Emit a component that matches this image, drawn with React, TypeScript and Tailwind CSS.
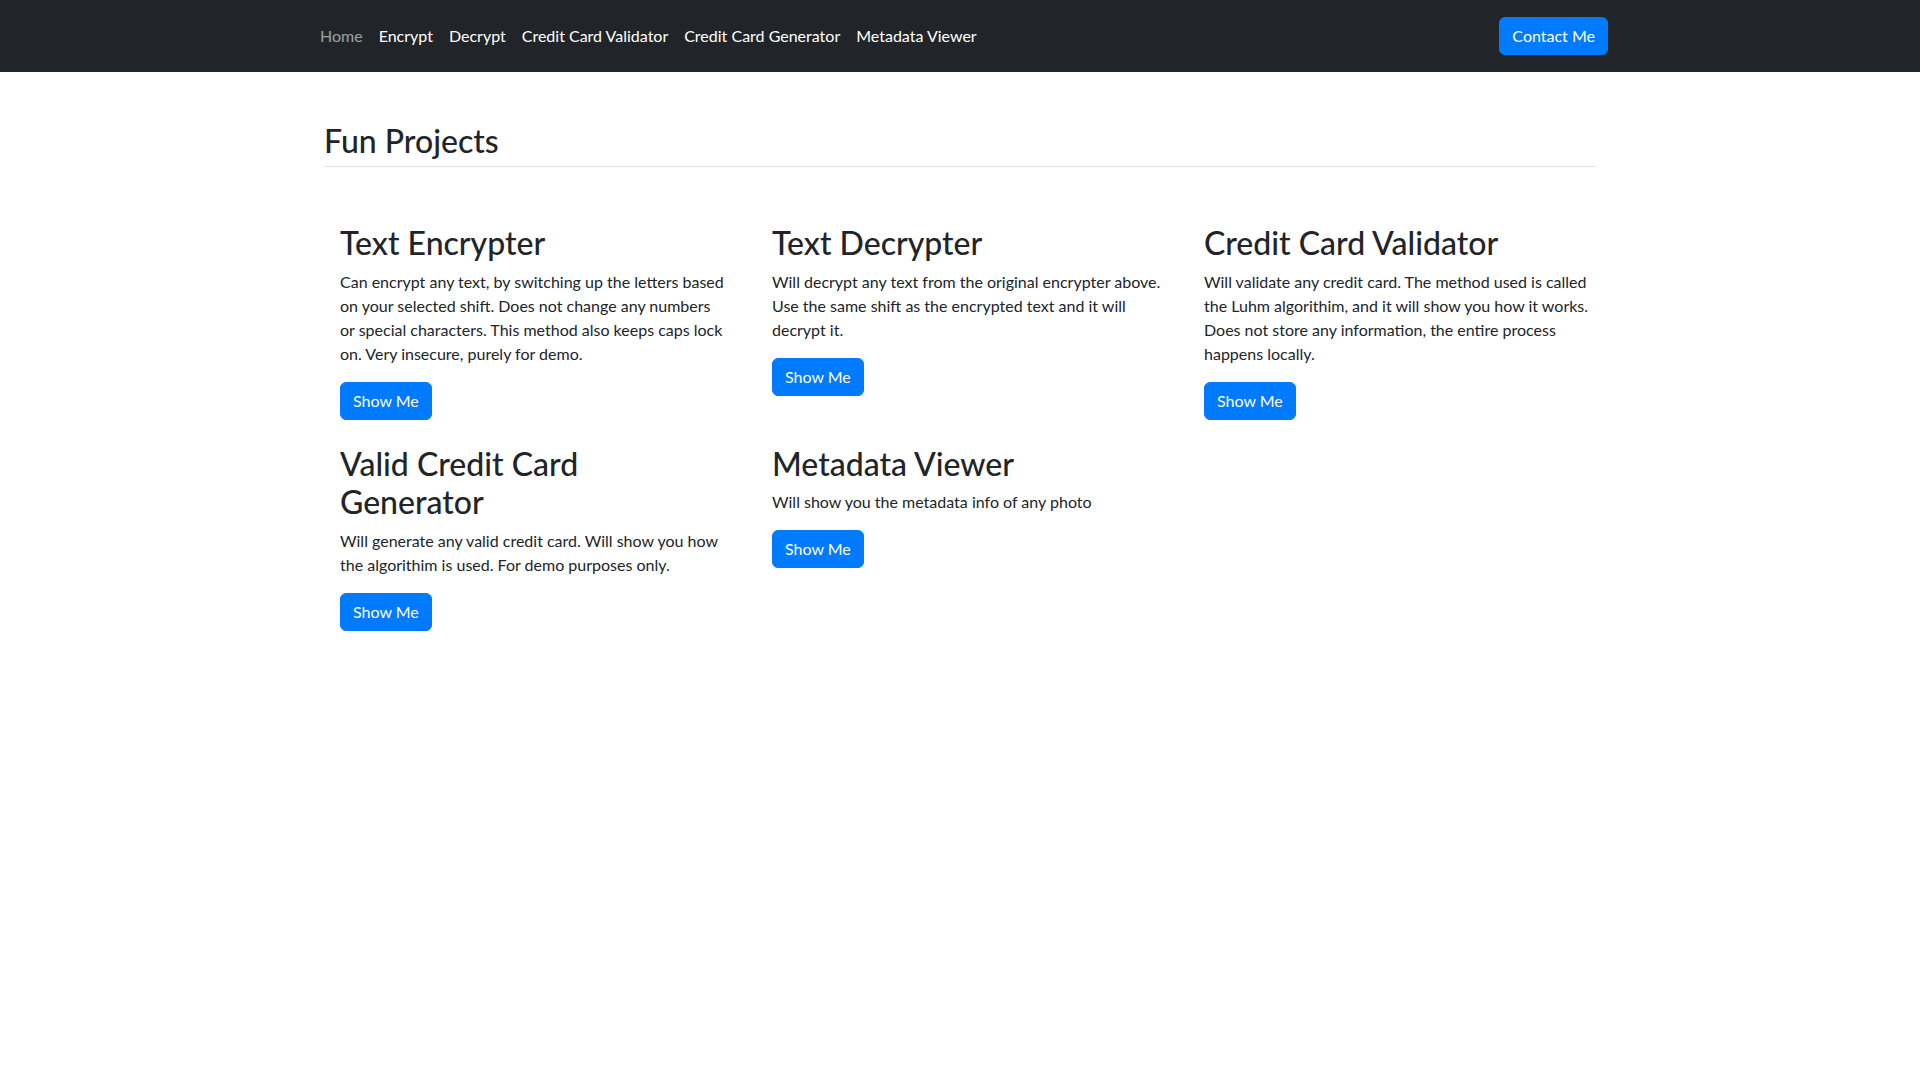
const navLinks = ["Encrypt", "Decrypt", "Credit Card Validator", "Credit Card Generator", "Metadata Viewer"]

const projects = [
  {
    title: "Text Encrypter",
    text: "Can encrypt any text, by switching up the letters based on your selected shift. Does not change any numbers or special characters. This method also keeps caps lock on. Very insecure, purely for demo.",
  },
  {
    title: "Text Decrypter",
    text: "Will decrypt any text from the original encrypter above. Use the same shift as the encrypted text and it will decrypt it.",
  },
  {
    title: "Credit Card Validator",
    text: "Will validate any credit card. The method used is called the Luhm algorithim, and it will show you how it works. Does not store any information, the entire process happens locally.",
  },
  {
    title: "Valid Credit Card Generator",
    text: "Will generate any valid credit card. Will show you how the algorithim is used. For demo purposes only.",
  },
  {
    title: "Metadata Viewer",
    text: "Will show you the metadata info of any photo",
  },
]

function Navbar() {
  return (
    <nav className="h-[72px] bg-[#212529]">
      <div className="mx-auto flex h-full w-[1320px] items-center justify-between px-3">
        <ul className="flex items-center">
          <li>
            <a href="#" className="block px-2 leading-6 text-white/55">Home</a>
          </li>
          {navLinks.map((link) => (
            <li key={link}>
              <a href="#" className="block px-2 leading-6 text-white">{link}</a>
            </li>
          ))}
        </ul>
        <button className="rounded-md border border-[#007bff] bg-[#007bff] px-3 py-1.5 leading-6 text-white">
          Contact Me
        </button>
      </div>
    </nav>
  )
}

export default function App() {
  return (
    <div className="min-h-screen bg-white font-['Lato',sans-serif] text-[16px] text-[#212529]">
      <Navbar />
      <main className="mx-auto w-[1320px] px-3">
        <div className="px-3">
          <h2 className="mt-[50px] border-b border-[#dee2e6] pb-1.5 text-[32px] leading-[1.2] font-medium">Fun Projects</h2>
          <div className="mt-14 grid grid-cols-3 gap-x-6 gap-y-6">
            {projects.map((p) => (
              <div key={p.title} className="pl-4">
                <div className="w-[389px]">
                  <h2 className="mb-[7px] pt-px text-[32px] leading-[1.2] font-medium">{p.title}</h2>
                  <p className="mb-4 leading-6">{p.text}</p>
                  <button className="rounded-md border border-[#007bff] bg-[#007bff] px-3 py-1.5 leading-6 text-white">
                    Show Me
                  </button>
                </div>
              </div>
            ))}
          </div>
        </div>
      </main>
    </div>
  )
}
